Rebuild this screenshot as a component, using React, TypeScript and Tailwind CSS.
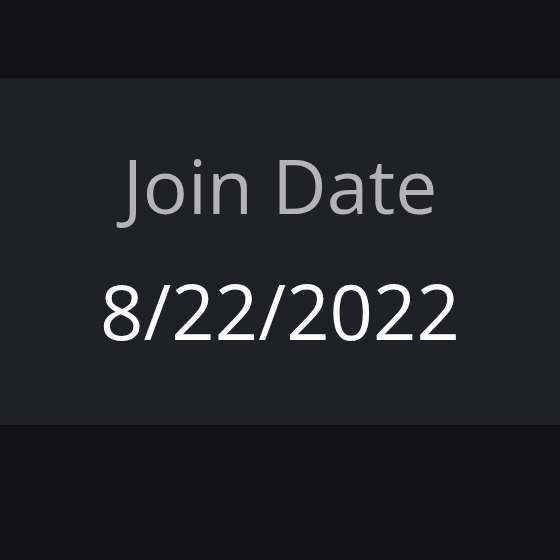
export default function App() {
  return (
    <div className="w-[560px] h-[560px] bg-[#121214] pt-[78px]" style={{ fontFamily: '"Open Sans", "Noto Sans", sans-serif' }}>
      <div className="h-[347px] bg-[#202125] flex flex-col items-center justify-center pb-[6px]">
        <div className="text-[75px] leading-none text-[#b4b4b4]">Join Date</div>
        <div className="text-[76px] leading-none text-white mt-[50px]">8/22/2022</div>
      </div>
    </div>
  );
}
